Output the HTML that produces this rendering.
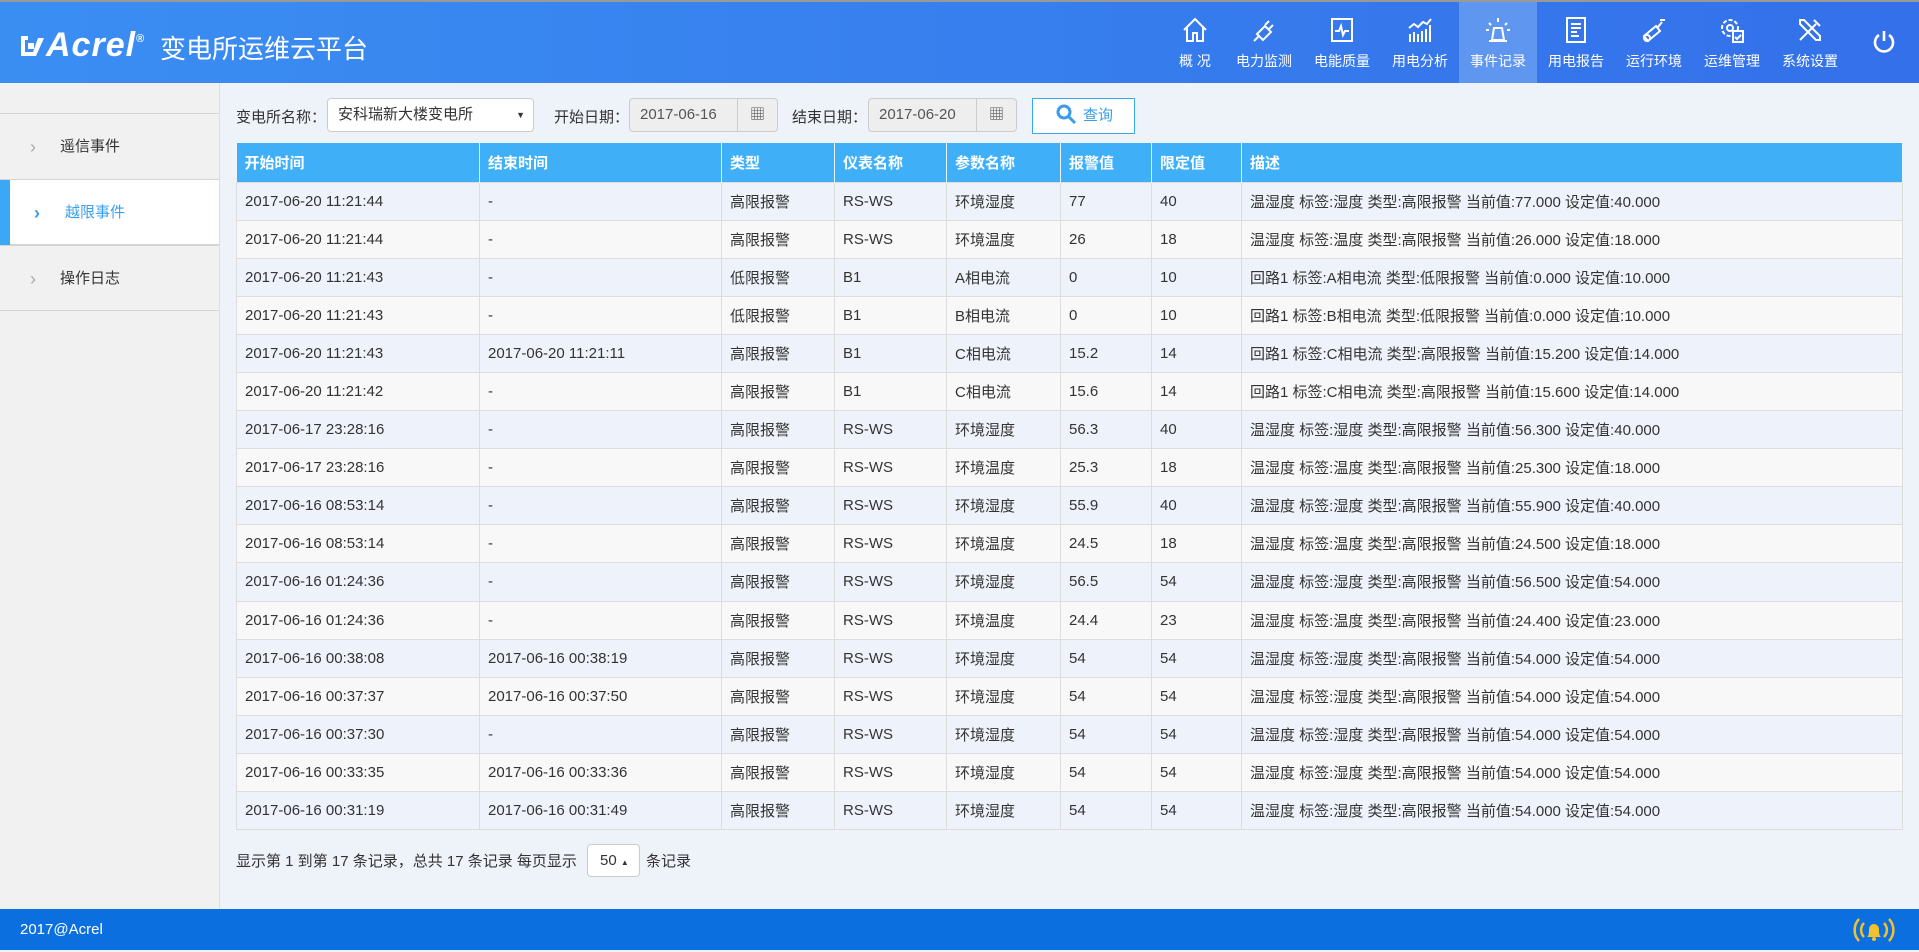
<!DOCTYPE html>
<html><head><meta charset="utf-8">
<style>
*{margin:0;padding:0;box-sizing:border-box}
body{width:1919px;height:952px;overflow:hidden;background:#eef3fa;font-family:"Liberation Sans","Noto Sans CJK SC",sans-serif;color:#333;position:relative}
#hdr{position:absolute;left:0;top:0;width:1919px;height:83px;background:linear-gradient(90deg,#3a8ef2,#3470ea);border-top:2px solid #999}
.logo{position:absolute;left:20px;top:24px;color:#fff;font:italic bold 34px "Liberation Sans",sans-serif;letter-spacing:1px}
.title{position:absolute;left:160px;top:27px;color:#fff;font-size:26px}
.nav{position:absolute;right:0;top:0;height:81px;display:flex}
.nav .it{height:81px;padding:0 11px;color:#fff;font-size:14px;text-align:center;position:relative;min-width:60px}
.nav .it svg{display:block;margin:14px auto 0;width:28px;height:28px}
.nav .it span{display:block;margin-top:7px;white-space:nowrap}
.nav .act{background:#5f97f0}
#side{position:absolute;left:0;top:83px;width:220px;height:827px;background:#f1f1f1;border-right:1px solid #ddd}
.si{position:absolute;left:0;width:219px;height:66px;border-top:1px solid #d4d4d4;font-size:15px;line-height:66px}
.si b{position:absolute;left:30px;color:#aaa;font-weight:normal;font-size:18px}
.si span{position:absolute;left:60px}
.si.a{background:#fff;border-bottom:1px solid #d4d4d4}
.si.a:before{content:"";position:absolute;left:0;top:0;width:10px;height:65px;background:#3aa8f5}
.si.a b{left:34px;color:#3a9be8;font-weight:bold}
.si.a span{left:65px;color:#3aa0ee}
.lbl{position:absolute;font-size:15px;top:106px}
.box{position:absolute;top:98px;height:34px;border:1px solid #ccc;border-radius:4px;font-size:15px;line-height:32px;padding-left:10px}
table{position:absolute;left:236px;top:143px;width:1667px;border-collapse:collapse;font-size:15px;table-layout:fixed}
th{background:#3fb0f8;color:#fff;text-align:left;height:39px;padding-left:8px;border-right:1px solid #e8f4fd;font-weight:bold}
td{height:38.1px;padding-left:8px;border:1px solid #ddd;white-space:nowrap;overflow:hidden}
tr:nth-child(odd) td{background:#f8f8f8}
tr:nth-child(even) td{background:#eef3fb}
#ftr{position:absolute;left:0;top:909px;width:1919px;height:41px;background:#0b6fe0;color:#fff;font-size:15px;line-height:41px;padding-left:20px}
</style></head><body>
<div id="hdr">
 <div class="logo"><svg width="26" height="24" viewBox="0 0 26 24" style="vertical-align:-2px"><path d="M1 2h7v4H5v12h8l5-14h6L16 22H1z" fill="#fff"/><rect x="8" y="9" width="6" height="6" fill="#fff"/></svg>Acrel<sup style="font-size:11px;font-style:normal;vertical-align:14px">®</sup></div>
 <div class="title">变电所运维云平台</div>
 <div class="nav">
  <div class="it"><svg viewBox="0 0 28 28" fill="none" stroke="#fff" stroke-width="2"><path d="M3 14L14 3l11 11M6 11v14h6v-8h4v8h6V11"/></svg><span>概 况</span></div>
  <div class="it"><svg viewBox="0 0 28 28" fill="none" stroke="#fff" stroke-width="2"><path d="M4 25l5-5M9 20l-2-2 8-8 6 6-8 8zM15 9l4-4M19 13l4-4"/></svg><span>电力监测</span></div>
  <div class="it"><svg viewBox="0 0 28 28" fill="none" stroke="#fff" stroke-width="2"><rect x="4" y="3" width="20" height="22"/><path d="M7 15h4l2-5 2 9 2-4h4"/></svg><span>电能质量</span></div>
  <div class="it"><svg viewBox="0 0 28 28" fill="none" stroke="#fff" stroke-width="2"><path d="M4 26v-8M8 26v-10M12 26v-8M16 26v-11M20 26v-13M24 26V9M3 12l5-4 4 3 5-5 4 2 4-5"/></svg><span>用电分析</span></div>
  <div class="it act"><svg viewBox="0 0 28 28" fill="none" stroke="#fff" stroke-width="2"><path d="M8 24l2-12h8l2 12zM5 25h18M14 2v4M5 7l2 2M23 7l-2 2M2 14h3M23 14h3"/></svg><span>事件记录</span></div>
  <div class="it"><svg viewBox="0 0 28 28" fill="none" stroke="#fff" stroke-width="2"><rect x="5" y="2" width="18" height="24"/><path d="M9 8h10M9 12h10M9 16h6M9 20h8"/></svg><span>用电报告</span></div>
  <div class="it"><svg viewBox="0 0 28 28" fill="none" stroke="#fff" stroke-width="2"><path d="M4 20l12-10 4 5-12 10zM18 11l4-5M20 4h5"/><circle cx="7" cy="22" r="3"/></svg><span>运行环境</span></div>
  <div class="it"><svg viewBox="0 0 28 28" fill="none" stroke="#fff" stroke-width="2"><circle cx="12" cy="12" r="8" stroke-dasharray="4 2"/><circle cx="12" cy="12" r="3"/><rect x="15" y="15" width="10" height="11" fill="#3a7cef"/><path d="M17 21l2 2 4-4"/></svg><span>运维管理</span></div>
  <div class="it"><svg viewBox="0 0 28 28" fill="none" stroke="#fff" stroke-width="2"><path d="M4 24L20 8M18 4l6 6M4 4l4 0 16 16v4h-4L4 8z"/></svg><span>系统设置</span></div>
  <div class="it" style="min-width:70px"><svg viewBox="0 0 28 28" fill="none" stroke="#fff" stroke-width="2.6" style="margin-top:26px"><path d="M9 7a9 9 0 1 0 10 0M14 3v10"/></svg></div>
 </div>
</div>
<div id="side">
 <div class="si" style="top:30px"><b>›</b><span>遥信事件</span></div>
 <div class="si a" style="top:96px"><b>›</b><span>越限事件</span></div>
 <div class="si" style="top:162px;border-bottom:1px solid #d4d4d4"><b>›</b><span>操作日志</span></div>
</div>
<div class="lbl" style="left:236px">变电所名称：</div>
<div class="box" style="left:327px;width:207px;background:#fff">安科瑞新大楼变电所<span style="position:absolute;right:8px;font-size:9px">▼</span></div>
<div class="lbl" style="left:554px">开始日期：</div>
<div class="box" style="left:629px;width:149px;background:#eee;color:#555">2017-06-16<span style="position:absolute;right:0;top:0;width:40px;height:32px;border-left:1px solid #ccc;text-align:center;color:#555">▦</span></div>
<div class="lbl" style="left:792px">结束日期：</div>
<div class="box" style="left:868px;width:149px;background:#eee;color:#555">2017-06-20<span style="position:absolute;right:0;top:0;width:40px;height:32px;border-left:1px solid #ccc;text-align:center;color:#555">▦</span></div>
<div class="box" style="left:1032px;width:103px;height:36px;background:#fff;border:1px solid #3aa8f0;border-radius:0;color:#3a9be8;padding-left:22px;line-height:34px"><svg width="22" height="22" viewBox="0 0 22 22" style="vertical-align:-5px;margin-right:6px" fill="none" stroke="#3a9be8" stroke-width="3"><circle cx="9" cy="9" r="6"/><path d="M13 13l7 7"/></svg>查询</div>
<table>
<colgroup><col style="width:243px"><col style="width:242px"><col style="width:113px"><col style="width:112px"><col style="width:114px"><col style="width:91px"><col style="width:90px"><col></colgroup>
<tr><th>开始时间</th><th>结束时间</th><th>类型</th><th>仪表名称</th><th>参数名称</th><th>报警值</th><th>限定值</th><th>描述</th></tr>
<tr><td>2017-06-20 11:21:44</td><td>-</td><td>高限报警</td><td>RS-WS</td><td>环境湿度</td><td>77</td><td>40</td><td>温湿度 标签:湿度 类型:高限报警 当前值:77.000 设定值:40.000</td></tr>
<tr><td>2017-06-20 11:21:44</td><td>-</td><td>高限报警</td><td>RS-WS</td><td>环境温度</td><td>26</td><td>18</td><td>温湿度 标签:温度 类型:高限报警 当前值:26.000 设定值:18.000</td></tr>
<tr><td>2017-06-20 11:21:43</td><td>-</td><td>低限报警</td><td>B1</td><td>A相电流</td><td>0</td><td>10</td><td>回路1 标签:A相电流 类型:低限报警 当前值:0.000 设定值:10.000</td></tr>
<tr><td>2017-06-20 11:21:43</td><td>-</td><td>低限报警</td><td>B1</td><td>B相电流</td><td>0</td><td>10</td><td>回路1 标签:B相电流 类型:低限报警 当前值:0.000 设定值:10.000</td></tr>
<tr><td>2017-06-20 11:21:43</td><td>2017-06-20 11:21:11</td><td>高限报警</td><td>B1</td><td>C相电流</td><td>15.2</td><td>14</td><td>回路1 标签:C相电流 类型:高限报警 当前值:15.200 设定值:14.000</td></tr>
<tr><td>2017-06-20 11:21:42</td><td>-</td><td>高限报警</td><td>B1</td><td>C相电流</td><td>15.6</td><td>14</td><td>回路1 标签:C相电流 类型:高限报警 当前值:15.600 设定值:14.000</td></tr>
<tr><td>2017-06-17 23:28:16</td><td>-</td><td>高限报警</td><td>RS-WS</td><td>环境湿度</td><td>56.3</td><td>40</td><td>温湿度 标签:湿度 类型:高限报警 当前值:56.300 设定值:40.000</td></tr>
<tr><td>2017-06-17 23:28:16</td><td>-</td><td>高限报警</td><td>RS-WS</td><td>环境温度</td><td>25.3</td><td>18</td><td>温湿度 标签:温度 类型:高限报警 当前值:25.300 设定值:18.000</td></tr>
<tr><td>2017-06-16 08:53:14</td><td>-</td><td>高限报警</td><td>RS-WS</td><td>环境湿度</td><td>55.9</td><td>40</td><td>温湿度 标签:湿度 类型:高限报警 当前值:55.900 设定值:40.000</td></tr>
<tr><td>2017-06-16 08:53:14</td><td>-</td><td>高限报警</td><td>RS-WS</td><td>环境温度</td><td>24.5</td><td>18</td><td>温湿度 标签:温度 类型:高限报警 当前值:24.500 设定值:18.000</td></tr>
<tr><td>2017-06-16 01:24:36</td><td>-</td><td>高限报警</td><td>RS-WS</td><td>环境湿度</td><td>56.5</td><td>54</td><td>温湿度 标签:湿度 类型:高限报警 当前值:56.500 设定值:54.000</td></tr>
<tr><td>2017-06-16 01:24:36</td><td>-</td><td>高限报警</td><td>RS-WS</td><td>环境温度</td><td>24.4</td><td>23</td><td>温湿度 标签:温度 类型:高限报警 当前值:24.400 设定值:23.000</td></tr>
<tr><td>2017-06-16 00:38:08</td><td>2017-06-16 00:38:19</td><td>高限报警</td><td>RS-WS</td><td>环境湿度</td><td>54</td><td>54</td><td>温湿度 标签:湿度 类型:高限报警 当前值:54.000 设定值:54.000</td></tr>
<tr><td>2017-06-16 00:37:37</td><td>2017-06-16 00:37:50</td><td>高限报警</td><td>RS-WS</td><td>环境湿度</td><td>54</td><td>54</td><td>温湿度 标签:湿度 类型:高限报警 当前值:54.000 设定值:54.000</td></tr>
<tr><td>2017-06-16 00:37:30</td><td>-</td><td>高限报警</td><td>RS-WS</td><td>环境湿度</td><td>54</td><td>54</td><td>温湿度 标签:湿度 类型:高限报警 当前值:54.000 设定值:54.000</td></tr>
<tr><td>2017-06-16 00:33:35</td><td>2017-06-16 00:33:36</td><td>高限报警</td><td>RS-WS</td><td>环境湿度</td><td>54</td><td>54</td><td>温湿度 标签:湿度 类型:高限报警 当前值:54.000 设定值:54.000</td></tr>
<tr><td>2017-06-16 00:31:19</td><td>2017-06-16 00:31:49</td><td>高限报警</td><td>RS-WS</td><td>环境湿度</td><td>54</td><td>54</td><td>温湿度 标签:湿度 类型:高限报警 当前值:54.000 设定值:54.000</td></tr>
</table>
<div class="lbl" style="left:236px;top:850px">显示第 1 到第 17 条记录，总共 17 条记录 每页显示</div>
<div class="box" style="left:587px;top:844px;width:53px;height:33px;background:#fff;padding-left:12px;line-height:31px">50 <span style="font-size:8px">▲</span></div>
<div class="lbl" style="left:646px;top:850px">条记录</div>
<div id="ftr">2017@Acrel
 <svg style="position:absolute;left:1852px;top:7px" width="44" height="28" viewBox="0 0 44 28" fill="none" stroke="#f2c12e" stroke-width="2.5"><path d="M7 3a16 16 0 0 0 0 22M37 3a16 16 0 0 1 0 22M12 7a10 10 0 0 0 0 14M32 7a10 10 0 0 1 0 14"/><path d="M15 21c2-2 2-4 2-8a5 5 0 0 1 10 0c0 4 0 6 2 8z" fill="#f2c12e" stroke="none"/><circle cx="22" cy="23" r="2" fill="#f2c12e" stroke="none"/></svg>
</div>
</body></html>
